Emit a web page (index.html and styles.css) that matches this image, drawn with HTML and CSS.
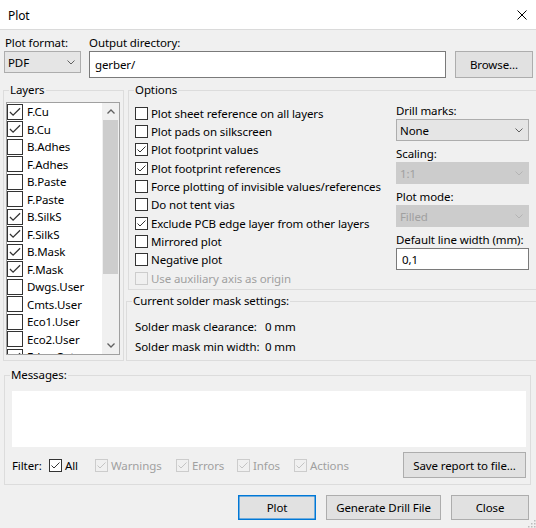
FILE: index.html
```html
<!DOCTYPE html>
<html lang="en">
<head>
    <meta charset="UTF-8">
    <title>Plot</title>
    <link rel="stylesheet" href="styles.css">
</head>
<body>
    <div class="titlebar">
        <span class="title">Plot</span>
        <svg class="close" width="10" height="10" viewBox="0 0 10 10"><path d="M0.5 0.5 L9.5 9.5 M9.5 0.5 L0.5 9.5" stroke="#000" stroke-width="1"/></svg>
    </div>

    <div class="dialog">
        <div class="top-row">
            <div class="fmt">
                <div class="lbl">Plot format:</div>
                <div class="select fmt-select">PDF<svg class="chev" width="8" height="5" viewBox="0 0 8 5"><path d="M0.5 0.5 L4 4 L7.5 0.5" fill="none" stroke="#606060"/></svg></div>
            </div>
            <div class="dir">
                <div class="lbl">Output directory:</div>
                <div class="dir-row">
                    <div class="textbox dir-box">gerber/</div>
                    <div class="btn browse">Browse...</div>
                </div>
            </div>
        </div>

        <div class="middle">
            <fieldset class="group layers">
                <legend>Layers</legend>
                <div class="listbox">
                    <div class="rows" id="layer-rows"></div>
                    <div class="scrollbar">
                        <div class="arrow"><svg width="8" height="5" viewBox="0 0 8 5"><path d="M0.5 4.5 L4 1 L7.5 4.5" fill="none" stroke="#606060" stroke-width="1.3"/></svg></div>
                        <div class="thumb"></div>
                        <div class="track"></div>
                        <div class="arrow"><svg width="8" height="5" viewBox="0 0 8 5"><path d="M0.5 0.5 L4 4 L7.5 0.5" fill="none" stroke="#606060" stroke-width="1.3"/></svg></div>
                    </div>
                </div>
            </fieldset>

            <div class="right-col">
                <fieldset class="group options">
                    <legend>Options</legend>
                    <div class="opt-list" id="opt-rows"></div>
                    <div class="opt-side">
                        <div class="lbl">Drill marks:</div>
                        <div class="select side-select">None<svg class="chev" width="8" height="5" viewBox="0 0 8 5"><path d="M0.5 0.5 L4 4 L7.5 0.5" fill="none" stroke="#606060"/></svg></div>
                        <div class="lbl">Scaling:</div>
                        <div class="select side-select disabled">1:1<svg class="chev" width="8" height="5" viewBox="0 0 8 5"><path d="M0.5 0.5 L4 4 L7.5 0.5" fill="none" stroke="#b4b4b4"/></svg></div>
                        <div class="lbl">Plot mode:</div>
                        <div class="select side-select disabled">Filled<svg class="chev" width="8" height="5" viewBox="0 0 8 5"><path d="M0.5 0.5 L4 4 L7.5 0.5" fill="none" stroke="#b4b4b4"/></svg></div>
                        <div class="lbl">Default line width (mm):</div>
                        <div class="textbox side-box">0,1</div>
                    </div>
                </fieldset>

                <fieldset class="group solder">
                    <legend>Current solder mask settings:</legend>
                    <div class="solder-grid">
                        <span>Solder mask clearance:</span><span>0 mm</span>
                        <span>Solder mask min width:</span><span>0 mm</span>
                    </div>
                </fieldset>
            </div>
        </div>

        <fieldset class="group messages">
            <legend>Messages:</legend>
            <div class="msg-area"></div>
            <div class="filter-row">
                <span class="filter-lbl">Filter:</span>
                <span class="filter-item f-all"><span class="cb checked"></span>All</span>
                <span class="filter-item f-warn off"><span class="cb checked"></span>Warnings</span>
                <span class="filter-item f-err off"><span class="cb checked"></span>Errors</span>
                <span class="filter-item f-info off"><span class="cb checked"></span>Infos</span>
                <span class="filter-item f-act off"><span class="cb checked"></span>Actions</span>
                <div class="btn save">Save report to file...</div>
            </div>
        </fieldset>

        <div class="buttons">
            <div class="btn default plot">Plot</div>
            <div class="btn drill">Generate Drill File</div>
            <div class="btn close-btn">Close</div>
        </div>
    </div>

    <svg class="grip" width="10" height="10" viewBox="0 0 10 10">
        <rect x="8" y="2" width="1.5" height="1.5" fill="#bcbcbc"/>
        <rect x="5" y="5" width="1.5" height="1.5" fill="#bcbcbc"/>
        <rect x="8" y="5" width="1.5" height="1.5" fill="#bcbcbc"/>
        <rect x="2" y="8" width="1.5" height="1.5" fill="#bcbcbc"/>
        <rect x="5" y="8" width="1.5" height="1.5" fill="#bcbcbc"/>
        <rect x="8" y="8" width="1.5" height="1.5" fill="#bcbcbc"/>
    </svg>

    <script>
        const layers = [
            ['F.Cu', true], ['B.Cu', true], ['B.Adhes', false], ['F.Adhes', false],
            ['B.Paste', false], ['F.Paste', false], ['B.SilkS', true], ['F.SilkS', true],
            ['B.Mask', true], ['F.Mask', true], ['Dwgs.User', false], ['Cmts.User', false],
            ['Eco1.User', false], ['Eco2.User', false], ['Edge.Cuts', true]
        ];
        const options = [
            ['Plot sheet reference on all layers', false],
            ['Plot pads on silkscreen', false],
            ['Plot footprint values', true],
            ['Plot footprint references', true],
            ['Force plotting of invisible values/references', false],
            ['Do not tent vias', false],
            ['Exclude PCB edge layer from other layers', true],
            ['Mirrored plot', false],
            ['Negative plot', false],
            ['Use auxiliary axis as origin', false, true]
        ];

        const layerRows = document.getElementById('layer-rows');
        for (let [name, on] of layers) {
            const row = document.createElement('div');
            row.className = 'layer-row';
            row.innerHTML = '<span class="cb big' + (on ? ' checked' : '') + '"></span>' + name;
            layerRows.appendChild(row);
        }

        const optRows = document.getElementById('opt-rows');
        for (let [text, on, disabled] of options) {
            const row = document.createElement('div');
            row.className = 'opt-row' + (disabled ? ' off' : '');
            row.innerHTML = '<span class="cb' + (on ? ' checked' : '') + '"></span>' + text;
            optRows.appendChild(row);
        }
    </script>
</body>
</html>
```

FILE: styles.css
```css
body {
    margin: 0;
    width: 536px;
    height: 528px;
    overflow: hidden;
    position: relative;
    background-color: #f0f0f0;
    font-family: "Noto Sans", sans-serif;
    font-size: 11.5px;
    letter-spacing: -0.1px;
    color: #000;
}
.titlebar {
    height: 29px;
    background-color: #fff;
    border-bottom: 1px solid #dadada;
    display: flex;
    align-items: center;
    justify-content: space-between;
    padding: 0 9px 0 8px;
}
.title {
    font-size: 12px;
    padding-top: 1px;
}
.close {
    display: block;
    margin-top: 1px;
}
.dialog {
    padding-top: 5px;
}
.lbl {
    height: 16px;
    line-height: 16px;
    white-space: nowrap;
}
.top-row {
    display: flex;
    padding-left: 4px;
}
.fmt {
    width: 77px;
    margin-right: 8px;
}
.fmt .lbl {
    padding-left: 1px;
}
.select {
    box-sizing: border-box;
    height: 22px;
    border: 1px solid #adadad;
    background-color: #e5e5e5;
    display: flex;
    align-items: center;
    justify-content: space-between;
    padding: 0 5px 0 3px;
}
.select.disabled {
    background-color: #cccccc;
    border-color: #cccccc;
    color: #a0a0a0;
}
.chev {
    display: block;
}
.dir-row {
    display: flex;
}
.textbox {
    box-sizing: border-box;
    border: 1px solid #7a7a7a;
    background-color: #fff;
    display: flex;
    align-items: center;
    padding-left: 5px;
}
.dir-box {
    width: 357px;
    height: 27px;
    padding-bottom: 1px;
}
.btn {
    box-sizing: border-box;
    border: 1px solid #adadad;
    background-color: #e1e1e1;
    display: flex;
    align-items: center;
    justify-content: center;
    white-space: nowrap;
}
.btn.default {
    border-color: #0078d7;
    box-shadow: inset 0 0 0 0.5px #0078d7;
}
.browse {
    width: 78px;
    height: 27px;
    margin-left: 9px;
}

/* group boxes */
.group {
    margin: 0;
    padding: 0;
    border: 1px solid #dcdcdc;
    min-width: 0;
}
.group legend {
    padding: 0 1px;
    margin-left: 5px;
    line-height: 16px;
    height: 16px;
}
.middle {
    display: flex;
    margin-top: 4px;
}
.layers {
    box-sizing: border-box;
    width: 121px;
    margin-left: 3px;
    flex: none;
}
.listbox {
    box-sizing: border-box;
    height: 253px;
    margin: 4px 3px 5px 2px;
    border: 1px solid #a0a0a0;
    background-color: #fff;
    display: flex;
}
.rows {
    flex: 1;
    overflow: hidden;
}
.layer-row {
    height: 17.5px;
    display: flex;
    align-items: center;
    gap: 4px;
    white-space: nowrap;
}
.scrollbar {
    width: 17px;
    background-color: #f0f0f0;
    display: flex;
    flex-direction: column;
}
.arrow {
    height: 17px;
    display: flex;
    align-items: center;
    justify-content: center;
}
.thumb {
    height: 154px;
    margin: 0 1px;
    background-color: #cdcdcd;
}
.track {
    flex: 1;
}

/* checkboxes */
.cb {
    box-sizing: border-box;
    width: 13px;
    height: 13px;
    border: 1px solid #333;
    background-color: #fff;
    flex: none;
}
.cb.big {
    width: 16px;
    height: 16px;
}
.cb.checked {
    background-image: url("data:image/svg+xml,%3Csvg xmlns='http://www.w3.org/2000/svg' viewBox='0 0 11 11'%3E%3Cpath d='M1.5 5.5 L4 8 L9.5 2.5' fill='none' stroke='%23333' stroke-width='1'/%3E%3C/svg%3E");
    background-size: 100% 100%;
}
.off {
    color: #a0a0a0;
}
.off .cb {
    border-color: #cccccc;
    background-color: #f0f0f0;
}
.off .cb.checked {
    background-image: url("data:image/svg+xml,%3Csvg xmlns='http://www.w3.org/2000/svg' viewBox='0 0 11 11'%3E%3Cpath d='M1.5 5.5 L4 8 L9.5 2.5' fill='none' stroke='%23c4c4c4' stroke-width='1'/%3E%3C/svg%3E");
}

/* options */
.right-col {
    flex: 1;
    margin-left: 4px;
    display: flex;
    flex-direction: column;
}
.options {
    border-right: none;
    display: flex;
    padding-bottom: 2px;
}
.opt-list {
    padding: 6px 0 0 6px;
}
.opt-row {
    height: 18.33px;
    display: flex;
    align-items: center;
    gap: 3px;
    white-space: nowrap;
}
.opt-side {
    width: 133px;
    margin: 5px 7px 0 auto;
}
.side-select {
    margin-bottom: 5px;
}
.side-box {
    height: 22px;
}
.solder {
    border-right: none;
    margin: 3px 0 0 -2px;
}
.solder-grid {
    display: grid;
    grid-template-columns: 130px auto;
    grid-auto-rows: 20px;
    align-items: center;
    white-space: nowrap;
    padding: 7px 0 4px 8px;
}

/* messages */
.messages {
    box-sizing: border-box;
    width: 527px;
    margin: 6px 0 0 4px;
}
.msg-area {
    height: 56px;
    margin: 8px 4px 0 7px;
    background-color: #fff;
}
.filter-row {
    display: flex;
    align-items: center;
    margin: 5px 4px 6px 7px;
}
.filter-lbl {
    width: 37px;
}
.filter-item {
    display: flex;
    align-items: center;
    gap: 3px;
}
.f-all { width: 46px; }
.f-warn { width: 81px; }
.f-err { width: 61px; }
.f-info { width: 57px; }
.save {
    width: 123px;
    height: 26px;
    margin-left: auto;
}
.buttons {
    display: flex;
    justify-content: flex-end;
    gap: 10px;
    margin-top: 10px;
    padding-right: 7px;
}
.buttons .btn {
    height: 25px;
}
.plot { width: 78px; }
.drill { width: 115px; }
.close-btn { width: 78px; }
.grip {
    position: absolute;
    right: 0;
    bottom: 0;
}
```
